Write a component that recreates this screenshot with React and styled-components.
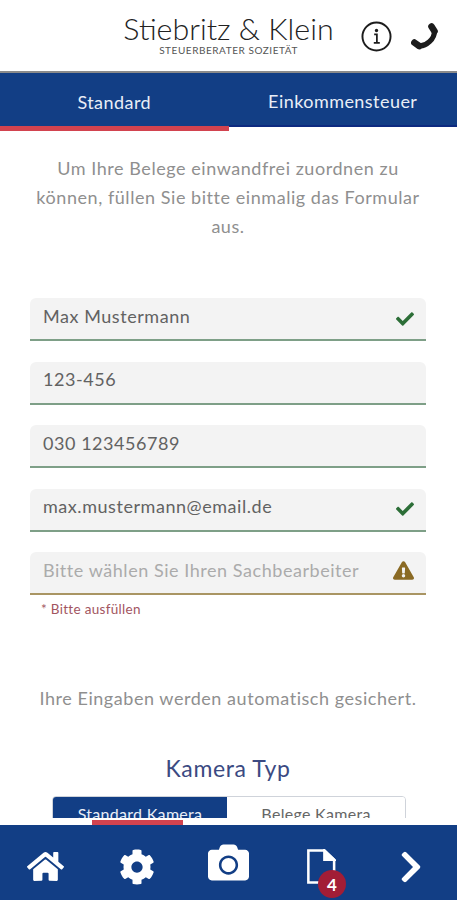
import React from 'react'
import styled, { createGlobalStyle } from 'styled-components'
import { FaHome, FaCog, FaCamera, FaChevronRight, FaCheck, FaExclamationTriangle } from 'react-icons/fa'

const NAVY = '#123e85'

const GlobalStyle = createGlobalStyle`
    html, body {
        margin: 0;
        padding: 0;
        background: #fff;
    }
    * {
        box-sizing: border-box;
    }
    body {
        font-family: "Lato", "Open Sans", sans-serif;
    }
`

const Page = styled.div`
    width: 457px;
    height: 900px;
    display: flex;
    flex-direction: column;
    overflow: hidden;
    background: #fff;
`

const Header = styled.header`
    height: 73px;
    flex: none;
    display: flex;
    align-items: flex-start;
    border-bottom: 2px solid #8b8b8b;
    padding: 13px 0 0 124px;
`

const Logo = styled.div`
    width: 209px;
    display: flex;
    flex-direction: column;
    align-items: center;
`

const LogoName = styled.div`
    font-family: "Lato", sans-serif;
    font-weight: 300;
    font-size: 30.4px;
    line-height: 31px;
    color: #222;
    white-space: nowrap;
`

const LogoSub = styled.div`
    font-family: "Lato", sans-serif;
    margin-top: 1px;
    font-size: 10px;
    line-height: 10px;
    letter-spacing: 0.55px;
    color: #555;
    white-space: nowrap;
`

const HeaderIcons = styled.div`
    display: flex;
    align-items: center;
    gap: 19px;
    margin: 8px 0 0 28px;
    color: #1c1c1c;
`

const Tabs = styled.nav`
    height: 54px;
    flex: none;
    display: flex;
    background: ${NAVY};
`

const Tab = styled.div`
    width: 50%;
    display: flex;
    justify-content: center;
    align-items: center;
    padding-top: ${p => (p.$active ? '4px' : '3px')};
    color: #e9eef7;
    font-size: 18px;
    letter-spacing: 0.45px;
    border-bottom: ${p => (p.$active ? '5px solid #d2434f' : '2px solid #0d2a80')};
    height: ${p => (p.$active ? '58px' : '54px')};
`

const Content = styled.main`
    flex: 1;
    min-height: 0;
    overflow: hidden;
    padding: 27px 31px 0 30px;
    margin-top: -5px;
`

const Intro = styled.p`
    margin: 0 auto 57px;
    width: 392px;
    padding-top: 5px;
    text-align: center;
    font-size: 18px;
    line-height: 29px;
    letter-spacing: 0.55px;
    color: #8f8f8f;
`

const Fields = styled.div`
    display: flex;
    flex-direction: column;
    gap: 20.5px;
`

const Field = styled.div`
    height: 43px;
    display: flex;
    align-items: center;
    justify-content: space-between;
    padding: 0 12px 6px 13px;
    background: #f3f3f3;
    border-radius: 6px 6px 0 0;
    border-bottom: 2px solid ${p => (p.$warn ? '#a99563' : '#7e9f87')};
    font-size: 18px;
    letter-spacing: 0.55px;
    color: ${p => (p.$placeholder ? '#ababab' : '#626262')};
    white-space: nowrap;
`

const CheckIcon = styled(FaCheck)`
    margin-top: 6px;
`

const WarnIcon = styled(FaExclamationTriangle)`
    margin-top: 2px;
`

const FieldError = styled.div`
    margin-top: 6px;
    padding-left: 11px;
    font-size: 13.5px;
    line-height: 16px;
    letter-spacing: 0.3px;
    color: #a2555f;
`

const SaveNote = styled.p`
    margin: 69px 0 0;
    text-align: center;
    font-size: 18px;
    line-height: 24px;
    letter-spacing: 0.55px;
    color: #8f8f8f;
    white-space: nowrap;
`

const SectionTitle = styled.h2`
    margin: 44px 0 0;
    text-align: center;
    font-weight: 400;
    font-size: 23px;
    line-height: 28px;
    letter-spacing: 0.6px;
    color: #3b4a82;
`

const Segments = styled.div`
    margin: 14px 20px 0 22px;
    display: flex;
    border: 1px solid #cfd3da;
    border-radius: 4px 4px 0 0;
    overflow: hidden;
`

const Segment = styled.div`
    width: ${p => (p.$active ? '175px' : '179px')};
    height: 34px;
    padding-top: 7px;
    text-align: center;
    font-size: 16px;
    line-height: 20px;
    letter-spacing: 0.3px;
    background: ${p => (p.$active ? NAVY : '#fff')};
    color: ${p => (p.$active ? '#e9eef7' : '#666')};
`

const Footer = styled.footer`
    position: relative;
    height: 75px;
    flex: none;
    display: grid;
    grid-template-columns: repeat(5, 1fr);
    margin-top: 7px;
    background: ${NAVY};
    color: #fff;
`

const FooterItem = styled.div`
    display: flex;
    align-items: center;
    justify-content: center;
    padding-top: ${p => p.$top || '8px'};
`

const FooterMark = styled.span`
    position: absolute;
    left: 92px;
    top: -5px;
    width: 91px;
    height: 5px;
    background: #d2434f;
`

const DocButton = styled.div`
    position: relative;
    display: flex;
    margin-left: 2px;
`

const Badge = styled.span`
    position: absolute;
    left: 12px;
    top: 21px;
    width: 28px;
    height: 28px;
    border-radius: 50%;
    background: #a21d36;
    color: #fff;
    font-size: 17px;
    font-weight: 700;
    display: flex;
    align-items: center;
    justify-content: center;
`

const InfoIcon = () => (
    <svg width="31" height="31" viewBox="0 0 32 32" fill="none" stroke="#1c1c1c">
        <circle cx="16" cy="16" r="14.5" strokeWidth="2" />
        <circle cx="16" cy="9.8" r="1.7" fill="#1c1c1c" stroke="none" />
        <path d="M13.6 13.8h2.8v8.6M13.2 22.6h6.2" strokeWidth="1.8" />
    </svg>
)

const PhoneIcon = () => (
    <svg width="27" height="27" viewBox="0 0 27 27" fill="none" stroke="#1c1c1c" strokeLinecap="round">
        <path d="M20.5 3.5l3 4.8" strokeWidth="6.6" />
        <path d="M3.4 19.6l4.8 3.4" strokeWidth="6.6" />
        <path d="M23.4 8C24 15.5 15 24 7.5 22.8" strokeWidth="5.2" />
    </svg>
)

const DocIcon = () => (
    <svg width="30" height="35" viewBox="0 0 30 36" fill="none" stroke="#fff" strokeWidth="2.6">
        <path d="M2 1.5h16.5L28.5 11v23.5H2z" />
        <path d="M18.5 1.5V11h10z" fill="#fff" />
    </svg>
)

const FIELDS = [
    { value: 'Max Mustermann', ok: true },
    { value: '123-456' },
    { value: '030 123456789' },
    { value: 'max.mustermann@email.de', ok: true },
]

const App = () => {
    return (
        <Page>
            <GlobalStyle />
            <Header>
                <Logo>
                    <LogoName>Stiebritz &amp; Klein</LogoName>
                    <LogoSub>STEUERBERATER SOZIETÄT</LogoSub>
                </Logo>
                <HeaderIcons>
                    <InfoIcon />
                    <PhoneIcon />
                </HeaderIcons>
            </Header>
            <Tabs>
                <Tab $active>Standard</Tab>
                <Tab>Einkommensteuer</Tab>
            </Tabs>
            <Content>
                <Intro>
                    Um Ihre Belege einwandfrei zuordnen zu können, füllen Sie bitte einmalig das Formular aus.
                </Intro>
                <Fields>
                    {FIELDS.map(f => (
                        <Field key={f.value}>
                            {f.value}
                            {f.ok && <CheckIcon size={18} color="#2c6e37" />}
                        </Field>
                    ))}
                    <Field $warn $placeholder>
                        Bitte wählen Sie Ihren Sachbearbeiter
                        <WarnIcon size={21} color="#8a6a24" />
                    </Field>
                </Fields>
                <FieldError>* Bitte ausfüllen</FieldError>
                <SaveNote>Ihre Eingaben werden automatisch gesichert.</SaveNote>
                <SectionTitle>Kamera Typ</SectionTitle>
                <Segments>
                    <Segment $active>Standard Kamera</Segment>
                    <Segment>Belege Kamera</Segment>
                </Segments>
            </Content>
            <Footer>
                <FooterMark />
                <FooterItem><FaHome size={37} /></FooterItem>
                <FooterItem><FaCog size={36} /></FooterItem>
                <FooterItem $top="0"><FaCamera size={41} /></FooterItem>
                <FooterItem>
                    <DocButton>
                        <DocIcon />
                        <Badge>4</Badge>
                    </DocButton>
                </FooterItem>
                <FooterItem><FaChevronRight size={36} /></FooterItem>
            </Footer>
        </Page>
    )
}

export default App
